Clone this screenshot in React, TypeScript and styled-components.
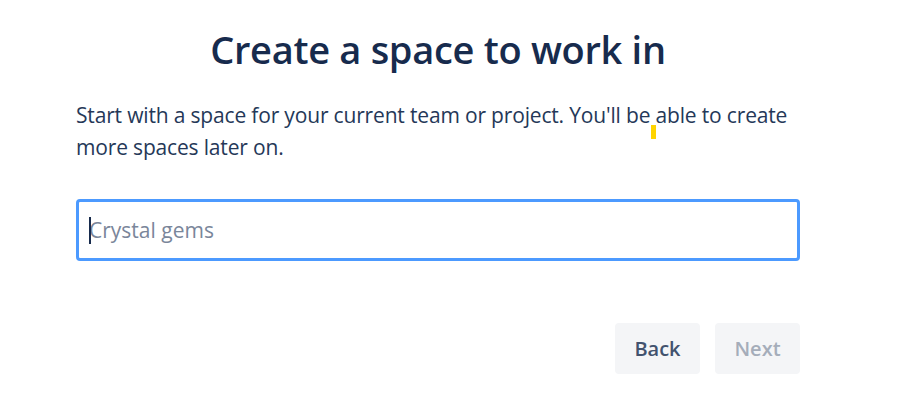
import React from "react";
import styled, { createGlobalStyle } from "styled-components";

const Global = createGlobalStyle`
  html, body { margin: 0; padding: 0; background: #ffffff; }
  body { font-family: "Open Sans", "Noto Sans", sans-serif; }
`;

const Page = styled.div`
  width: 922px;
  height: 404px;
  box-sizing: border-box;
  padding: 24px 0 0 76px;
  position: relative;
  overflow: hidden;
`;

const Panel = styled.div`
  width: 724px;
  display: flex;
  flex-direction: column;
`;

const Title = styled.h1`
  margin: 0;
  text-align: center;
  font-size: 38px;
  line-height: 50px;
  font-weight: 600;
  color: #172b4d;
  letter-spacing: -0.3px;
`;

const Lead = styled.p`
  margin: 25px 0 0;
  font-size: 21px;
  line-height: 32px;
  color: #253858;
  letter-spacing: -0.17px;
`;

const Field = styled.div`
  margin-top: 36px;
  height: 62px;
  box-sizing: border-box;
  border: 3px solid #4c9aff;
  border-radius: 4px;
  display: flex;
  align-items: center;
  padding: 0 10px;
  position: relative;
`;

const Input = styled.input`
  flex: 1;
  border: none;
  outline: none;
  background: transparent;
  font-family: inherit;
  font-size: 21px;
  color: #172b4d;
  padding: 0;
  &::placeholder { color: #7a869a; }
`;

const Caret = styled.span`
  position: absolute;
  left: 10px;
  top: 15px;
  width: 2px;
  height: 27px;
  background: #172b4d;
`;

const Actions = styled.div`
  margin-top: 62px;
  display: flex;
  justify-content: flex-end;
  gap: 15px;
`;

const Button = styled.button<{ $disabled?: boolean }>`
  height: 51px;
  width: 85px;
  padding: 0;
  border: none;
  border-radius: 4px;
  background: #f4f5f7;
  font-family: inherit;
  font-size: 20px;
  font-weight: 600;
  color: ${(p) => (p.$disabled ? "#a5adba" : "#42526e")};
  cursor: ${(p) => (p.$disabled ? "default" : "pointer")};
`;

const Marker = styled.span`
  position: absolute;
  left: 651px;
  top: 125px;
  width: 5px;
  height: 14px;
  background: #ffd400;
`;

export default function App() {
  return (
    <>
      <Global />
      <Page>
        <Panel>
          <Title>Create a space to work in</Title>
          <Lead>
            Start with a space for your current team or project. You'll be able to create
            more spaces later on.
          </Lead>
          <Field>
            <Caret />
            <Input placeholder="Crystal gems" readOnly />
          </Field>
          <Actions>
            <Button>Back</Button>
            <Button $disabled>Next</Button>
          </Actions>
        </Panel>
        <Marker />
      </Page>
    </>
  );
}
